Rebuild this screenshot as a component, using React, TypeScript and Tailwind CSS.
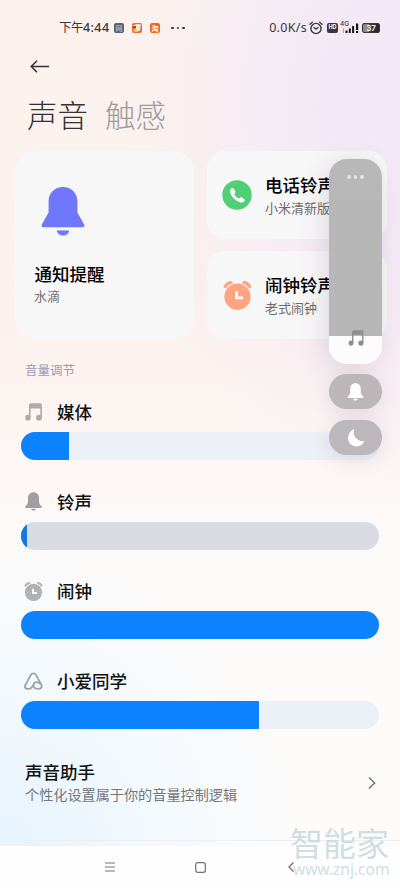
import type { ReactNode } from "react";
import { clsx } from "clsx";

type IconProps = { className?: string };

function BellIcon({ className }: IconProps) {
  return (
    <svg viewBox="0 0 44 50" fill="currentColor" className={className}>
      <path d="M22 0C13.500 0 7.300 6.300 7.300 14.500V26L.4 38.200C-.4 39.600.3 41 1.900 41h40.200c1.600 0 2.300-1.400 1.500-2.800L36.700 26V14.500C36.700 6.300 30.500 0 22 0Z" />
      <path d="M15.500 44.300h13c-.6 3-3.300 5.200-6.500 5.200s-5.900-2.200-6.500-5.200Z" />
    </svg>
  );
}

function SmallBellIcon({ className }: IconProps) {
  return (
    <svg viewBox="0 0 17 19" fill="currentColor" className={className}>
      <path d="M8.500.2c-3.200 0-5.500 2.300-5.500 5.500v3.800c0 1.400-.5 2.400-1.300 3.400L.5 14.300c-.7.900-.3 1.600.7 1.600h14.600c1 0 1.400-.7.700-1.600l-1.200-1.400c-.8-1-1.300-2-1.300-3.400V5.700c0-3.200-2.300-5.500-5.500-5.500Z" />
      <path d="M6 16.700h5c-.3 1.200-1.300 1.900-2.500 1.900S6.300 17.900 6 16.700Z" />
    </svg>
  );
}

function MusicIcon({ className }: IconProps) {
  return (
    <svg viewBox="0 0 17 18" fill="currentColor" className={className}>
      <path d="M4 2.200C4 1 4.800.3 6 .3h9c1.200 0 1.900.7 1.900 1.900V14.500h-1.600V5.400H5.600v9.100H4Z" />
      <ellipse cx="2.900" cy="14.700" rx="2.700" ry="2.900" />
      <ellipse cx="14" cy="14.700" rx="2.900" ry="2.900" />
    </svg>
  );
}

function AlarmIcon({ className }: IconProps) {
  return (
    <svg viewBox="0 0 28 28" className={className}>
      <circle cx="14" cy="15.200" r="12.700" fill="currentColor" />
      <path
        d="M1 5.400C2.200 2.600 4.600.8 7.600.4l1.600 1.200C6.200 2.600 4 4.400 2.400 6.800ZM27 5.400C25.800 2.600 23.400.8 20.400.4l-1.600 1.200c3 1 5.200 2.800 6.800 5.200Z"
        fill="currentColor"
        stroke="currentColor"
        strokeLinejoin="round"
      />
      <path d="M13.200 10v6.200h6" fill="none" stroke="white" strokeWidth="2.600" />
    </svg>
  );
}

function AssistantIcon({ className }: IconProps) {
  return (
    <svg
      viewBox="0 0 20 19"
      fill="none"
      stroke="currentColor"
      strokeWidth="1.900"
      strokeLinecap="round"
      strokeLinejoin="round"
      className={className}
    >
      <path d="M10.200 13.500 7.800 16.500C7 17.500 6.200 17.900 5 17.900H3.700c-2.300 0-3.400-2-2.300-4L7 3.300c1.400-2.500 4.300-2.500 5.700 0l5.400 9.800c1.300 2.400.1 4.800-2.600 4.800-2.300 0-5.300-.7-5.500-3.700-.1-2.200 1.400-3.600 3.200-3.600 1.500 0 2.900.7 4 1.900" />
    </svg>
  );
}

function PhoneIcon({ className }: IconProps) {
  return (
    <svg viewBox="0 0 30 30" className={className}>
      <circle cx="15" cy="15" r="14.700" fill="#50cf76" />
      <path
        d="M8.900 8.700c.8-1 2-1.100 2.700-.1l1.500 2.300c.6.900.3 1.700-.6 2.500-.5.500-.2 1.100.5 2 .8 1 1.700 1.900 2.800 2.600.9.600 1.500.7 2 .1.700-.9 1.500-1.100 2.400-.4l2 1.600c.9.800.6 1.800-.4 2.500-1.900 1.300-4.400.6-6.700-.8-2-1.200-3.900-3-5.200-5-1.500-2.400-2.700-5.300-1-7.300Z"
        fill="white"
      />
    </svg>
  );
}

function StatusAlarmIcon() {
  return (
    <svg viewBox="0 0 14 14" fill="none" stroke="#3b3639" className="h-3.5 w-3.5" strokeLinecap="round">
      <circle cx="7" cy="7.500" r="5.100" strokeWidth="1.400" />
      <path d="M1 3.300 3.400 1.300M13 3.300l-2.400-2" strokeWidth="1.400" />
      <path d="m5 6.500 2 1.700 2-1.700" strokeWidth="1.300" />
    </svg>
  );
}

function StatusBar() {
  return (
    <div className="flex h-14 items-center text-[#3b3639]">
      <span className="ml-[59px] flex w-[51px] items-baseline text-[12.500px] whitespace-nowrap">
        <span className="tracking-[-0.5px]">下午</span>
        <span className="font-[Noto_Sans] text-[12.500px] font-medium tracking-[0.4px]">4:44</span>
      </span>
      <div className="ml-1 flex items-center gap-2">
        <span className="grid h-2.5 w-2.5 place-items-center rounded-[2px] bg-[#53627d] text-[7px] leading-none text-[#cfd6e4]">
          网
        </span>
        <svg viewBox="0 0 10 10" className="h-2.5 w-2.5">
          <rect width="10" height="10" rx="2" fill="#e2703a" />
          <path d="M1 2.500 5 1l4 .5-1 6-3.500 1.500Z" fill="#f7e6d2" />
          <path d="M1 3h3v2.500H1Z" fill="#6c5a4c" />
          <path d="M1 6h3.500L5 9H2Z" fill="#f2bd3a" />
        </svg>
        <span className="grid h-2.5 w-2.5 place-items-center rounded-[2px] bg-[#fb6118] text-[7px] leading-none font-bold text-white">
          淘
        </span>
      </div>
      <div className="ml-[11px] flex gap-[3px]">
        <i className="h-[2.500px] w-[2.500px] rounded-full bg-[#3b3639]" />
        <i className="h-[2.500px] w-[2.500px] rounded-full bg-[#3b3639]" />
        <i className="h-[2.500px] w-[2.500px] rounded-full bg-[#3b3639]" />
      </div>
      <div className="mr-5 ml-auto flex items-center">
        <span className="mr-[2px] font-[Noto_Sans] text-[12.500px] tracking-[0.3px]">0.0K/s</span>
        <StatusAlarmIcon />
        <span className="ml-[4px] grid h-[10px] w-[11px] place-items-center rounded-[2px] bg-[#3b3639] font-[Inter] text-[5.500px] leading-none font-bold text-white">
          HD
        </span>
        <div className="relative ml-[2px] h-3 w-[20px]">
          <span className="absolute -top-[1px] left-0 font-[Inter] text-[6.500px] leading-none font-medium">4G</span>
          <svg viewBox="0 0 20 12" className="h-3 w-[20px]" fill="#161316">
            <path d="M5.500 8.500h2V11h-2ZM8.800 6.500h2V11h-2ZM12.100 4h2v7h-2ZM16 1.500h2.200V8H16ZM16 9h2.200v2H16Z" />
            <path d="M3 6.500h1V11H3Z" fill="#aaa3aa" />
          </svg>
        </div>
        <div className="ml-[2px] flex h-[10px] w-[18px] items-center justify-center rounded-[2px] border border-[#3b3639] bg-[linear-gradient(90deg,#8d888d_35%,#4b464b_35%,#2d292d_70%)] font-[Inter] text-[8px] leading-none font-semibold text-white">
          37
        </div>
      </div>
    </div>
  );
}

function SoundTile({ icon, title, value }: { icon: ReactNode; title: string; value: string }) {
  return (
    <div className="flex h-[88px] items-center rounded-[18px] bg-[#f8f7f8] pl-[15px]">
      {icon}
      <div className="ml-[13px] whitespace-nowrap">
        <h2 className="text-[17.500px] leading-[24px] font-medium text-black">{title}</h2>
        <p className="text-[13px] leading-[21px] text-[#6d6b6c]">{value}</p>
      </div>
    </div>
  );
}

const VOLUMES = [
  { label: "媒体", level: 13.4, Icon: MusicIcon, icon: "ml-[25px] w-[17px] h-[18px] text-[#aeaaa9]", track: "bg-[#ecf0f7]", fill: "bg-[#0c82ff]" },
  { label: "铃声", level: 1.6, Icon: SmallBellIcon, icon: "ml-[25px] w-[17px] h-[19px] text-[#a09e9e]", track: "bg-[#d8dce2]", fill: "bg-[#1379df]" },
  { label: "闹钟", level: 100, Icon: AlarmIcon, icon: "ml-[24px] w-[19px] h-[19px] text-[#b0b2b2]", track: "bg-[#ecf0f7]", fill: "bg-[#0c82ff]" },
  { label: "小爱同学", level: 66.6, Icon: AssistantIcon, icon: "ml-[24px] w-[19px] h-[18px] text-[#a0a3a6]", track: "bg-[#ecf1f7]", fill: "bg-[#0c82ff]" },
];

function VolumeOverlay() {
  return (
    <div className="absolute top-[159px] left-[329px] w-[53px]">
      <div className="flex h-[205px] flex-col items-center rounded-[18px] bg-[linear-gradient(180deg,#b9b8b9_0px,#b7b6b6_177px,#fdfbfc_177px)] shadow-[-4px_4px_26px_rgba(90,70,90,0.17)]">
        <div className="mt-[16px] flex gap-[3px]">
          <i className="h-[3.500px] w-[3.500px] rounded-full bg-[#e5e4e5]" />
          <i className="h-[3.500px] w-[3.500px] rounded-full bg-[#e5e4e5]" />
          <i className="h-[3.500px] w-[3.500px] rounded-full bg-[#e5e4e5]" />
        </div>
        <MusicIcon className="mt-auto mb-[18px] h-4 w-4 text-[#8f8d8e]" />
      </div>
      <div className="mt-[10px] grid h-[35px] place-items-center rounded-full bg-[#bdb6b9] shadow-[0_4px_20px_rgba(90,70,90,0.14)]">
        <SmallBellIcon className="h-[18px] w-[17px] text-white" />
      </div>
      <div className="mt-[11px] grid h-[35px] place-items-center rounded-full bg-[#bbb7ba] shadow-[0_4px_20px_rgba(90,70,90,0.14)]">
        <svg viewBox="0 0 18 18" fill="white" className="h-[18px] w-[18px]">
          <path d="M7.200.7C5 5.800 9.500 12.600 16.500 12.100c.7 0 .9.400.5 1-1.500 2.600-4.200 4.300-7.400 4.300C4.900 17.400 1 13.700 1 9 1 5.200 3.300 2 6.300.4c.6-.3 1.100-.2.900.3Z" />
        </svg>
      </div>
    </div>
  );
}

function NavBar() {
  return (
    <nav className="relative h-[42px] bg-[#fefefe]">
      <div className="flex h-full items-center text-[#727272]">
        <svg viewBox="0 0 10 10" className="ml-[105px] h-[10px] w-[10px]" stroke="currentColor">
          <path d="M0 1h10M0 5h10M0 9h10" />
        </svg>
        <svg viewBox="0 0 11 11" className="ml-[80px] h-[11px] w-[11px]" fill="none" stroke="currentColor" strokeWidth="1.200">
          <rect x=".7" y=".7" width="9.600" height="9.600" rx="2" />
        </svg>
        <svg viewBox="0 0 6 10" className="ml-[82px] h-[10px] w-[6px]" fill="none" stroke="currentColor" strokeWidth="1.300">
          <path d="M5.500.5 1 5l4.500 4.500" />
        </svg>
      </div>
      <div className="absolute top-[-20px] left-[290px] w-[102px] whitespace-nowrap text-[#c8dade]/90">
        <div className="text-[33px] leading-[33px]">智能家</div>
        <div className="ml-[3px] font-[Noto_Sans] text-[15.500px] leading-[20px]">www.znj.com</div>
      </div>
    </nav>
  );
}

export default function App() {
  return (
    <div className="relative h-[888px] w-[400px] overflow-hidden bg-[linear-gradient(180deg,#fbf2ed_0%,#fcf1ee_35%,#fdf5f3_48%,#fcfaf9_62%,#fdfcfb_100%)] font-['Noto_Sans_CJK_SC',sans-serif]">
      <div className="flex h-full flex-col bg-[radial-gradient(ellipse_300px_400px_at_106%_12%,#f2e8f7_0%,#f4eaf6_40%,#f6ecf500_100%),radial-gradient(ellipse_300px_320px_at_0%_96%,#e6f3fd_0%,#f3f9fe_50%,#f6fafe00_100%)]">
        <StatusBar />
        <header>
          <svg viewBox="0 0 19 13" className="mt-[4px] ml-[30px] h-[13px] w-[19px]" fill="none" stroke="#353131" strokeWidth="1.500">
            <path d="M19 6.500H1.300M7 .7 1.200 6.500 7 12.300" />
          </svg>
          <div className="mt-[19px] ml-[27px] flex gap-[17px] text-[30.500px] leading-[44px] font-light">
            <h1 className="text-[#353131]">声音</h1>
            <span className="text-[#a19a99]">触感</span>
          </div>
        </header>

        <section className="mt-[15px] ml-[15px] flex gap-[13px]">
          <div className="flex h-[188px] w-[179px] flex-col rounded-[20px] bg-[#f7f7f7]">
            <BellIcon className="mt-[36px] ml-[26px] h-[49px] w-[44px] text-[#6f77fc]" />
            <h2 className="mt-[26px] ml-[19.500px] text-[17.500px] leading-[24px] font-medium text-black">通知提醒</h2>
            <p className="-mt-px ml-[19px] text-[13px] leading-[21px] text-[#727272]">水滴</p>
          </div>
          <div className="flex w-[180px] flex-col gap-[12px]">
            <SoundTile icon={<PhoneIcon className="h-[30px] w-[30px]" />} title="电话铃声" value="小米清新版" />
            <SoundTile icon={<AlarmIcon className="ml-[1px] h-[29px] w-[29px] text-[#fea483]" />} title="闹钟铃声" value="老式闹钟" />
          </div>
        </section>

        <p className="mt-[21px] ml-[25px] text-[12.500px] leading-[20px] text-[#9a9ab2]">音量调节</p>

        <section className="mt-[18px]">
          {VOLUMES.map(({ label, level, Icon, icon, track, fill }) => (
            <div key={label} className="h-[89.600px]">
              <div className="flex h-[28px] items-center">
                <div className="w-[57px]">
                  <Icon className={icon} />
                </div>
                <span className="text-[17.500px] leading-[28px] font-medium text-[#111]">{label}</span>
              </div>
              <div className={clsx("mt-[6px] ml-[21px] h-[28px] w-[358px] overflow-hidden rounded-full", track)}>
                <div className={clsx("h-full", fill)} style={{ width: `${level}%` }} />
              </div>
            </div>
          ))}
        </section>

        <section className="mt-[4px] flex items-center pr-6 pl-[25px]">
          <div>
            <h2 className="text-[17.500px] leading-[24px] font-medium text-[#111]">声音助手</h2>
            <p className="text-[14.150px] leading-[21px] text-[#747678]">个性化设置属于你的音量控制逻辑</p>
          </div>
          <svg viewBox="0 0 8 12" className="ml-auto h-[12px] w-[8px]" fill="none" stroke="#6f6f6f" strokeWidth="1.400">
            <path d="m1 .6 5.600 5.400L1 11.400" />
          </svg>
        </section>

        <div className="mt-auto">
          <div className="mb-[5px] ml-[25px] h-px bg-[#e9eff4]" />
          <NavBar />
        </div>
      </div>
      <VolumeOverlay />
    </div>
  );
}
